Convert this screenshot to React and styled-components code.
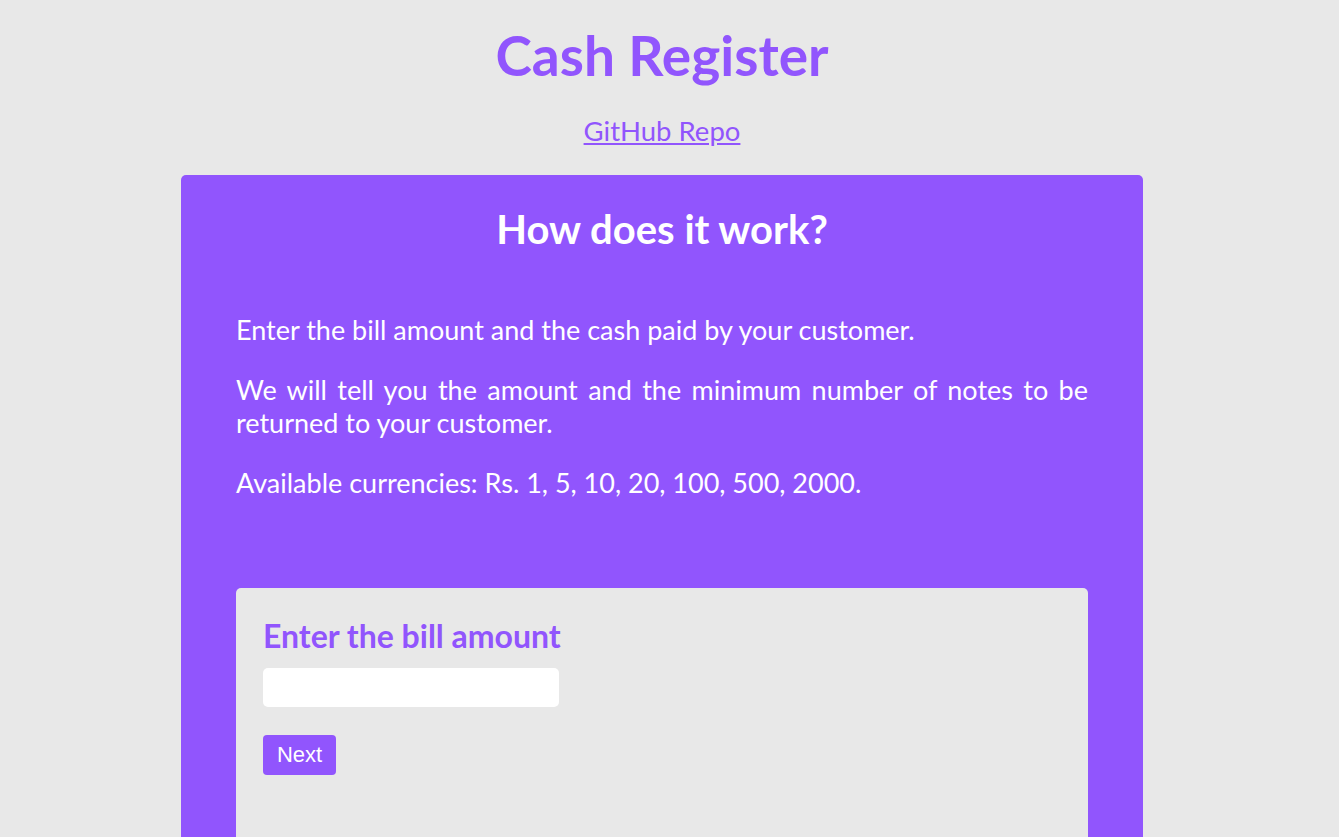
import React from "react";
import styled, { createGlobalStyle } from "styled-components";

const purple = "#9155fd";
const grey = "#e8e8e8";

const Global = createGlobalStyle`
  html, body { margin: 0; padding: 0; background: ${grey}; }
  body { font-family: Lato, "Noto Sans", sans-serif; }
`;

const Page = styled.div`
  display: flex;
  flex-direction: column;
  align-items: center;
  padding: 20px 15px 0 0;
`;

const Title = styled.h1`
  margin: 0;
  font-size: 55px;
  font-weight: 700;
  color: ${purple};
  line-height: 70px;
`;

const RepoLink = styled.a`
  margin-top: 24px;
  font-size: 27.5px;
  color: ${purple};
  text-decoration: underline;
`;

const Card = styled.section`
  margin-top: 28px;
  width: 962px;
  box-sizing: border-box;
  background: ${purple};
  border-radius: 5px;
  padding: 24px 55px 60px;
  color: #fff;
`;

const CardTitle = styled.h2`
  margin: 0 0 54px;
  text-align: center;
  font-size: 40px;
  font-weight: 700;
  line-height: 60px;
`;

const Para = styled.p`
  margin: 0 0 27px;
  font-size: 27px;
  line-height: 33px;
  text-align: justify;
`;

const Panel = styled.div`
  margin-top: 89px;
  background: ${grey};
  border-radius: 5px;
  padding: 28px 27px 60px;
  min-height: 200px;
`;

const PanelTitle = styled.h3`
  margin: 0 0 12px;
  font-size: 32px;
  font-weight: 700;
  color: ${purple};
  line-height: 40px;
`;

const Input = styled.input`
  display: block;
  width: 296px;
  height: 39px;
  box-sizing: border-box;
  border: none;
  border-radius: 5px;
  background: #fff;
  outline: none;
`;

const Button = styled.button`
  margin-top: 28px;
  height: 40px;
  width: 73px;
  padding: 0;
  border: none;
  border-radius: 4px;
  background: ${purple};
  color: #fff;
  font-family: "Liberation Sans", Arial, sans-serif;
  font-size: 22px;
`;

export default function App() {
  return (
    <>
      <Global />
      <Page>
        <Title>Cash Register</Title>
        <RepoLink href="#">GitHub Repo</RepoLink>
        <Card>
          <CardTitle>How does it work?</CardTitle>
          <Para>Enter the bill amount and the cash paid by your customer.</Para>
          <Para>
            We will tell you the amount and the minimum number of notes to be
            returned to your customer.
          </Para>
          <Para>Available currencies: Rs. 1, 5, 10, 20, 100, 500, 2000.</Para>
          <Panel>
            <PanelTitle>Enter the bill amount</PanelTitle>
            <Input type="number" />
            <Button>Next</Button>
          </Panel>
        </Card>
      </Page>
    </>
  );
}
